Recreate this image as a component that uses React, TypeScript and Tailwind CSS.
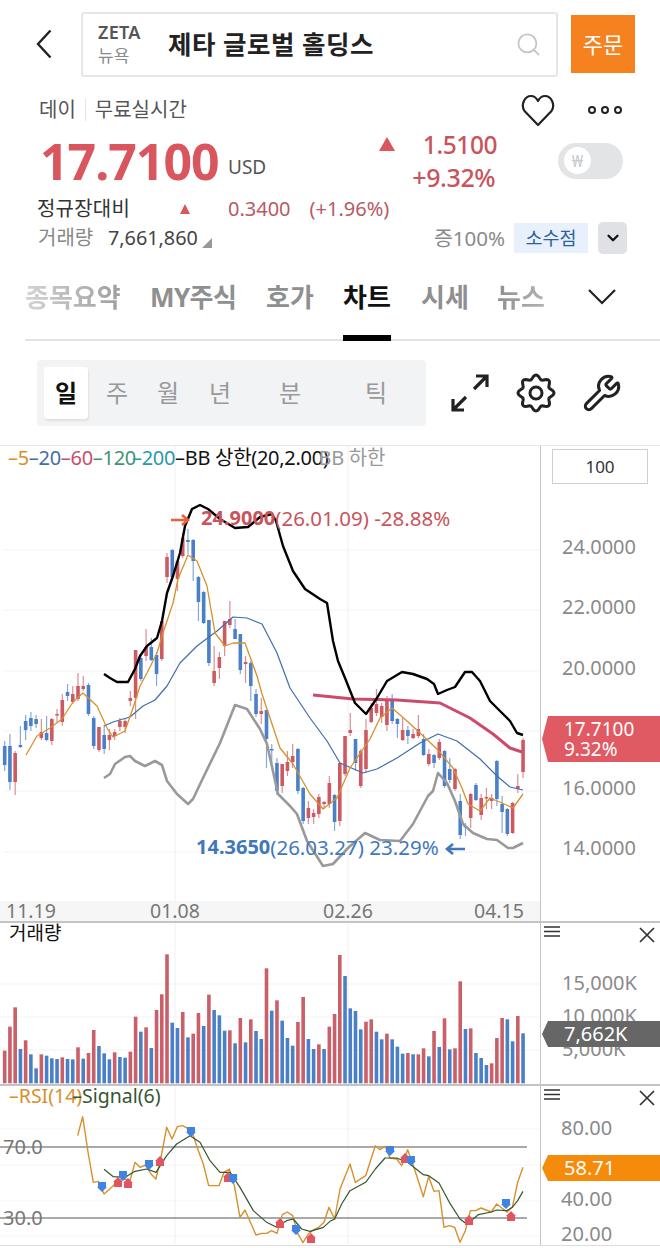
import { Wrench, Search, ChevronDown } from "lucide-react";

const stepX = 5.236;
const xAt = (i: number) => 4.7 + stepX * i;

// [kind, body top, body bottom, wick top, wick bottom]
type Candle = ["r" | "b", number, number, number, number];

const candles: Candle[] = [
  ["b", 745, 764, 740, 770], ["b", 745, 781, 733, 789], ["r", 752, 781, 750, 794], ["b", 744, 746, 725, 747],
  ["b", 720, 729, 714, 739], ["b", 717, 725, 711, 730], ["b", 718, 723, 714, 727], ["r", 731, 737, 718, 739],
  ["b", 732, 739, 715, 740], ["r", 718, 740, 717, 744], ["r", 713, 714, 708, 721], ["r", 699, 721, 693, 725],
  ["b", 691, 695, 683, 700], ["r", 693, 701, 685, 703], ["r", 685, 698, 672, 700], ["r", 685, 688, 675, 690],
  ["b", 684, 713, 682, 715], ["b", 717, 745, 715, 748], ["r", 726, 749, 726, 751], ["b", 734, 748, 724, 753],
  ["r", 734, 739, 728, 749], ["r", 731, 735, 728, 739], ["r", 720, 726, 717, 730], ["r", 720, 726, 717, 732],
  ["r", 697, 700, 690, 705], ["r", 649, 697, 649, 718], ["b", 657, 678, 655, 680], ["r", 646, 655, 628, 660],
  ["b", 646, 659, 637, 660], ["b", 654, 673, 651, 685], ["r", 620, 658, 620, 660], ["r", 556, 576, 552, 582],
  ["b", 549, 576, 548, 577], ["r", 560, 578, 559, 590], ["r", 537, 555, 532, 557], ["b", 539, 541, 528, 553],
  ["b", 539, 560, 538, 580], ["b", 576, 601, 575, 620], ["b", 591, 622, 590, 623], ["b", 619, 662, 619, 665],
  ["r", 670, 682, 645, 685], ["r", 656, 667, 651, 678], ["r", 620, 645, 620, 655], ["r", 618, 624, 600, 627],
  ["b", 628, 638, 618, 638], ["b", 633, 669, 633, 673], ["r", 661, 663, 655, 682], ["b", 662, 685, 660, 700],
  ["b", 693, 713, 688, 716], ["r", 710, 713, 697, 723], ["b", 709, 738, 709, 767], ["b", 748, 749, 743, 763],
  ["b", 762, 790, 757, 794], ["r", 763, 785, 763, 792], ["r", 761, 770, 750, 775], ["r", 755, 761, 743, 767],
  ["b", 748, 790, 747, 793], ["b", 787, 820, 786, 823], ["r", 807, 817, 800, 823], ["r", 812, 816, 808, 823],
  ["r", 796, 813, 793, 817], ["r", 801, 803, 800, 808], ["r", 782, 803, 775, 807], ["b", 794, 821, 793, 830],
  ["r", 762, 820, 762, 825], ["r", 735, 773, 735, 775], ["r", 729, 732, 712, 735], ["b", 738, 762, 738, 770],
  ["r", 750, 785, 748, 787], ["r", 729, 768, 718, 772], ["r", 707, 721, 702, 722], ["r", 703, 712, 688, 715],
  ["r", 705, 716, 702, 722], ["r", 698, 724, 695, 730], ["b", 698, 720, 693, 723], ["b", 718, 723, 717, 737],
  ["r", 729, 739, 717, 740], ["b", 729, 735, 725, 743], ["r", 733, 737, 728, 738], ["r", 728, 735, 714, 737],
  ["b", 738, 754, 733, 755], ["r", 753, 763, 748, 765], ["b", 754, 762, 753, 767], ["r", 741, 757, 738, 759],
  ["b", 750, 785, 749, 787], ["b", 768, 779, 757, 782], ["r", 768, 788, 767, 790], ["b", 800, 834, 793, 838],
  ["b", 825, 826, 822, 835], ["r", 793, 817, 792, 827], ["b", 784, 799, 782, 800], ["r", 797, 814, 793, 819],
  ["r", 796, 797, 787, 808], ["r", 797, 800, 793, 808], ["b", 760, 798, 759, 805], ["b", 803, 811, 795, 832],
  ["b", 808, 833, 807, 835], ["r", 802, 832, 801, 833], ["r", 785, 788, 773, 792], ["r", 739, 771, 737, 777],
];

// [kind, bar top on the 3x crop]
const volumes: ["r" | "b", number][] = [
  ["r", 392], ["r", 320], ["r", 262], ["b", 387], ["r", 361], ["b", 403], ["b", 445], ["r", 403], ["b", 407], ["b", 415],
  ["b", 417], ["r", 412], ["b", 417], ["b", 418], ["r", 382], ["b", 416], ["r", 399], ["r", 330], ["b", 378], ["b", 400],
  ["b", 418], ["r", 397], ["b", 411], ["b", 413], ["r", 395], ["r", 290], ["b", 335], ["r", 322], ["b", 384], ["r", 270],
  ["r", 223], ["r", 103], ["b", 308], ["b", 324], ["r", 276], ["b", 352], ["r", 341], ["r", 279], ["b", 318], ["r", 224],
  ["b", 270], ["b", 286], ["b", 332], ["r", 331], ["b", 370], ["r", 294], ["b", 367], ["r", 298], ["b", 333], ["b", 357],
  ["r", 145], ["b", 272], ["r", 241], ["b", 302], ["b", 354], ["b", 377], ["r", 306], ["r", 231], ["b", 357], ["b", 387],
  ["r", 373], ["b", 387], ["r", 320], ["r", 282], ["r", 105], ["b", 168], ["b", 265], ["b", 273], ["b", 328], ["r", 305],
  ["r", 298], ["b", 335], ["b", 358], ["r", 341], ["b", 358], ["b", 380], ["b", 401], ["r", 399], ["b", 403], ["r", 403],
  ["r", 385], ["b", 409], ["r", 333], ["b", 381], ["r", 295], ["b", 388], ["r", 385], ["r", 184], ["b", 327], ["r", 325],
  ["b", 399], ["b", 414], ["b", 435], ["r", 430], ["r", 354], ["r", 294], ["b", 298], ["b", 364], ["r", 288], ["b", 340],
];

const bbUpper =
  "104,673 110,677 117,681 128,681 135,668 140,655 147,645 157,637 162,620 167,592 173,575 180,552 185,525 192,508 200,504 208,508 220,518 235,527 248,526 260,516 272,513 276,520 283,545 293,570 305,588 320,598 327,602 333,640 338,660 345,677 355,702 366,713 377,697 387,680 402,671 413,673 427,678 434,683 438,693 447,689 455,686 465,671 472,671 480,680 490,700 500,710 510,720 517,732 523,734";
const bbLower =
  "104,777 110,773 115,763 125,756 130,755 135,760 145,765 155,760 162,764 167,780 177,793 188,803 193,798 203,777 220,742 235,704 247,708 260,728 267,743 278,793 290,805 297,813 307,840 323,865 333,863 348,847 365,832 380,839 400,840 413,823 428,795 433,790 438,772 447,782 455,800 463,823 473,832 487,838 497,839 508,847 513,847 523,842";
const ma60 = "313,694 353,698 397,699 440,702 470,717 493,733 510,747 522,751";
const ma20 =
  "104,725 113,721 130,716 143,705 155,699 167,685 180,662 197,645 217,630 233,616 247,617 262,623 277,652 290,687 310,717 327,740 340,762 363,772 377,768 397,757 420,742 438,733 457,740 480,758 497,775 510,786 523,789";
const ma5 =
  "26,754 37,735 50,727 62,718 73,701 83,692 97,705 107,727 113,736 125,730 133,707 140,685 147,672 157,652 163,632 173,602 178,578 188,554 197,560 207,585 215,632 225,645 233,642 245,642 257,675 262,693 280,747 293,763 310,793 323,808 337,797 350,767 370,738 380,717 392,707 407,720 420,732 437,748 453,767 462,787 468,803 480,810 490,797 502,802 513,807 523,793";

const toPoints = (left: [number, number][], right: [number, number][]) =>
  [...left.map(([x, y]) => `${x / 3},${y / 3}`), ...right.map(([x, y]) => `${330 + x / 3},${y / 3}`)].join(" ");

const rsiLine = toPoints(
  [[233, 155], [248, 98], [265, 210], [280, 295], [295, 292], [312, 330], [335, 310], [355, 290], [375, 285], [390, 290], [405, 235], [420, 250], [437, 243], [453, 270], [468, 285], [485, 210], [500, 130], [516, 165], [532, 128], [548, 125], [575, 140], [595, 200], [610, 240], [626, 305], [657, 305], [672, 265], [688, 255], [703, 305], [720, 400], [735, 378], [768, 453], [785, 448], [800, 448], [815, 440], [831, 448], [847, 392], [862, 384], [878, 395], [893, 448], [909, 476], [925, 450], [940, 438], [956, 430], [972, 415], [987, 370]],
  [[14, 405], [30, 315], [60, 240], [76, 295], [107, 275], [136, 185], [150, 197], [165, 187], [180, 222], [200, 225], [215, 245], [233, 197], [250, 245], [265, 290], [280, 338], [296, 278], [312, 322], [327, 320], [342, 430], [358, 425], [374, 430], [390, 475], [406, 440], [421, 380], [437, 380], [453, 372], [484, 384], [500, 360], [531, 384], [547, 370], [563, 295], [579, 250]],
);
const signalLine = toPoints(
  [[312, 256], [340, 278], [375, 280], [405, 262], [440, 255], [468, 265], [500, 215], [530, 180], [570, 155], [600, 175], [630, 230], [660, 265], [690, 265], [720, 310], [760, 380], [800, 415], [830, 430], [860, 410], [880, 405], [905, 435], [930, 442], [970, 430]],
  [[0, 412], [14, 405], [35, 360], [60, 320], [107, 295], [136, 255], [165, 222], [200, 222], [233, 235], [280, 272], [296, 275], [327, 297], [358, 355], [390, 405], [410, 420], [445, 392], [484, 384], [500, 378], [530, 380], [547, 370], [563, 350], [579, 322]],
);

const sellMarks = [[102, 102], [123, 91], [149, 80], [191, 47], [233, 94], [296, 145], [390, 66], [411, 76], [506, 119]];
const buyMarks = [[118, 99], [128, 100], [160, 78], [228, 94], [280, 140], [311, 155], [405, 75], [469, 137], [511, 133]];

// 8-lobed outline of the settings cog
const gearPath = Array.from({ length: 97 }, (_, i) => {
  const t = (i / 96) * Math.PI * 2;
  const r = 16 + 2 * Math.cos(8 * t);
  return `${i === 0 ? "M" : "L"}${(20 + r * Math.sin(t)).toFixed(2)} ${(20 - r * Math.cos(t)).toFixed(2)}`;
}).join("") + "Z";

const RED = "#cc5a62";
const BLUE = "#4a80c8";

function PriceChart() {
  return (
    <svg width="540" height="475" viewBox="0 445 540 475" className="block">
      {[549, 609, 670, 730, 790, 851].map((y) => (
        <line key={y} x1="4" x2="540" y1={y} y2={y} stroke="#f3f3f3" />
      ))}
      {[175, 348].map((x) => (
        <line key={x} x1={x} x2={x} y1="445" y2="900" stroke="#f0f0f0" />
      ))}
      {candles.map(([kind, top, bottom, wickTop, wickBottom], i) => (
        <g key={i}>
          <line x1={xAt(i)} x2={xAt(i)} y1={wickTop} y2={wickBottom} stroke={kind === "r" ? "#d98f94" : "#84a8d8"} strokeWidth="1.2" />
          <rect x={xAt(i) - 1.8} y={top} width="3.6" height={Math.max(bottom - top, 1.5)} fill={kind === "r" ? RED : BLUE} />
        </g>
      ))}
      <polyline points={bbLower} fill="none" stroke="#999999" strokeWidth="2.6" strokeLinejoin="round" />
      <polyline points={ma60} fill="none" stroke="#cc4a6c" strokeWidth="3" strokeLinejoin="round" />
      <polyline points={ma20} fill="none" stroke="#3f6ea8" strokeWidth="1.2" strokeLinejoin="round" />
      <polyline points={ma5} fill="none" stroke="#d8902c" strokeWidth="1.3" strokeLinejoin="round" />
      <polyline points={bbUpper} fill="none" stroke="#000000" strokeWidth="2.4" strokeLinejoin="round" />
      <path d="M171 519H188M182 514l6 5-6 5" fill="none" stroke="#e8603c" strokeWidth="2.6" />
      <path d="M448 848H465M453 843l-6 5 6 5" fill="none" stroke="#3f78bd" strokeWidth="2.6" />
    </svg>
  );
}

function VolumeChart() {
  return (
    <svg width="540" height="161" viewBox="0 923 540 161" className="block">
      {[984, 1017, 1050].map((y) => (
        <line key={y} x1="0" x2="540" y1={y} y2={y} stroke="#f3f3f3" />
      ))}
      {[175, 348].map((x) => (
        <line key={x} x1={x} x2={x} y1="921" y2="1084" stroke="#f0f0f0" />
      ))}
      {volumes.map(([kind, top], i) => (
        <rect key={i} x={xAt(i) - 1.8} y={920 + top / 3} width="3.6" height={(490 - top) / 3} fill={kind === "r" ? "#c95f68" : "#4a80c8"} />
      ))}
    </svg>
  );
}

function RsiChart() {
  return (
    <svg width="540" height="158" viewBox="0 2 540 158" className="block">
      {[45, 81, 117, 152].map((y) => (
        <line key={y} x1="0" x2="540" y1={y} y2={y} stroke="#f4f4f4" />
      ))}
      {[175, 348].map((x) => (
        <line key={x} x1={x} x2={x} y1="0" y2="160" stroke="#f0f0f0" />
      ))}
      <line x1="0" x2="527" y1="63" y2="63" stroke="#555555" strokeWidth="1.2" />
      <line x1="0" x2="527" y1="134" y2="134" stroke="#555555" strokeWidth="1.2" />
      <polyline points={rsiLine} fill="none" stroke="#d8902c" strokeWidth="1.4" strokeLinejoin="round" />
      <polyline points={signalLine} fill="none" stroke="#35562f" strokeWidth="1.2" strokeLinejoin="round" />
      {buyMarks.map(([x, y], i) => (
        <path key={i} d={`M${x} ${y - 6}l5 5h-1V${y + 4}h-8V${y - 1}h-1z`} fill="#e0555f" />
      ))}
      {sellMarks.map(([x, y], i) => (
        <path key={i} d={`M${x} ${y + 6}l5-5h-1V${y - 4}h-8V${y + 1}h-1z`} fill="#3f84e0" />
      ))}
    </svg>
  );
}

function AxisTools() {
  return (
    <div className="flex items-start justify-between h-[20px] pl-[2px] pr-[4px] pt-[2px]">
      <svg width="18" height="14" viewBox="0 0 18 14" fill="none" stroke="#333333" strokeWidth="1.3">
        <path d="M1 2H17M1 6.5H17M1 11H17" />
      </svg>
      <svg width="18" height="18" viewBox="0 0 18 18" fill="none" stroke="#333333" strokeWidth="1.7" className="mt-[1px]">
        <path d="M2 2L16 16M16 2L2 16" />
      </svg>
    </div>
  );
}

function Tag({ children, color }: { children: React.ReactNode; color: string }) {
  return (
    <div
      className="w-[118px] pl-[22px] text-white flex flex-col justify-center [clip-path:polygon(6px_0,100%_0,100%_100%,6px_100%,0_50%)]"
      style={{ backgroundColor: color }}
    >
      {children}
    </div>
  );
}

export default function App() {
  return (
    <div className="w-[660px] h-[1248px] overflow-hidden bg-white flex flex-col font-['Noto_Sans','Noto_Sans_CJK_KR',sans-serif]">
      {/* 상단 검색 */}
      <div className="h-[88px] shrink-0 flex items-center pl-[36px]">
        <svg width="16" height="30" viewBox="0 0 16 30" fill="none" stroke="#222222" strokeWidth="2.4" className="shrink-0">
          <path d="M14.5 1.5L2 15L14.5 28.5" />
        </svg>
        <div className="ml-[29px] w-[477px] h-[65px] border-2 border-[#e4e6e8] rounded-[3px] flex items-center pl-[15px] pr-[14px]">
          <div className="w-[70px] flex flex-col leading-[24px]">
            <span className="text-[18px] font-semibold text-[#555] tracking-[0.3px]">ZETA</span>
            <span className="text-[17px] text-[#8a8a8a]">뉴욕</span>
          </div>
          <span className="text-[25.5px] font-bold text-[#222] tracking-[0.5px] flex-1">제타 글로벌 홀딩스</span>
          <Search size={27} strokeWidth={1.6} className="text-[#c6c6c6]" />
        </div>
        <div className="ml-[13px] w-[64px] h-[58px] bg-[#f5821f] text-white text-[22px] flex items-center justify-center">주문</div>
      </div>

      {/* 시세 정보 */}
      <div className="h-[38px] shrink-0 mt-[3px] flex items-center pl-[39px] pr-[38px] text-[20px] text-[#555]">
        <span>데이</span>
        <span className="mx-[9px] w-px h-[22px] bg-[#e4e4e4]" />
        <span>무료실시간</span>
        <svg width="34" height="34" viewBox="0 0 34 34" fill="none" stroke="#222222" strokeWidth="2.2" strokeLinejoin="round" className="ml-auto mr-[-1px]">
          <path d="M17 32L3.5 18C-0.5 12 3.5 3 10 3C13 3 15.5 5 17 8C18.5 5 21 3 24 3C30.5 3 34.5 12 30.5 18Z" />
        </svg>
        <div className="ml-[34px] flex gap-[5px]">
          <span className="w-[8px] h-[8px] rounded-full border-2 border-[#222]" />
          <span className="w-[8px] h-[8px] rounded-full border-2 border-[#222]" />
          <span className="w-[8px] h-[8px] rounded-full border-2 border-[#222]" />
        </div>
      </div>
      <div className="h-[63px] shrink-0 flex items-center pl-[40px] pr-[37px]">
        <span className="w-[188px] text-[50px] font-bold text-[#d9565f] tracking-[-1px] leading-none">17.7100</span>
        <span className="text-[19px] text-[#555] mt-[14px]">USD</span>
        <div className="ml-[113px] w-[118px] flex flex-col text-[#c8545c] text-[24.5px] font-medium leading-[33px]">
          <div className="flex items-center justify-between">
            <span className="w-0 h-0 border-x-[8px] border-x-transparent border-b-[14px] border-b-[#d9565f]" />
            <span className="tracking-[-0.4px]">1.5100</span>
          </div>
          <span className="text-right tracking-[-0.4px] pr-[2px] text-[25px]">+9.32%</span>
        </div>
        <div className="ml-auto w-[65px] h-[36px] rounded-full bg-[#e2e4e6] flex items-center pl-[6px]">
          <span className="w-[27px] h-[27px] rounded-full bg-white text-[#c9cbcd] text-[17px] flex items-center justify-center">₩</span>
        </div>
      </div>
      <div className="h-[28px] shrink-0 mt-[3px] flex items-center pl-[37px] text-[20px]">
        <span className="w-[143px] text-[#333] tracking-[0.2px]">정규장대비</span>
        <span className="w-0 h-0 border-x-[5px] border-x-transparent border-b-[10px] border-b-[#d9565f]" />
        <span className="ml-[38px] text-[#b85a62]">0.3400</span>
        <span className="ml-[19px] text-[#b85a62]">(+1.96%)</span>
      </div>
      <div className="h-[30px] shrink-0 flex items-center pl-[38px] pr-[33px] text-[20px]">
        <span className="w-[70px] text-[#888]">거래량</span>
        <span className="text-[#444] text-[19.8px]">7,661,860</span>
        <span className="ml-[4px] mt-[10px] w-0 h-0 border-l-[10px] border-l-transparent border-b-[10px] border-b-[#999]" />
        <span className="ml-auto text-[#8a8a8a] text-[20.5px]">증100%</span>
        <span className="ml-[9px] w-[74px] h-[30px] bg-[#e8f1fb] text-[#2f5f9f] text-[18.5px] flex items-center justify-center">소수점</span>
        <span className="ml-[10px] w-[29px] h-[32px] rounded-[5px] bg-[#dfe1e4] flex items-center justify-center">
          <ChevronDown size={18} strokeWidth={3} className="text-[#111]" />
        </span>
      </div>

      {/* 탭 */}
      <div className="h-[88px] shrink-0 ml-[25px] border-b-2 border-[#e2e2e2] flex items-start pt-[27px] text-[26px] font-bold text-[#8f8f8f]">
        <span className="w-[125px] leading-[34px] bg-linear-to-r from-[#d4d4d4] to-[#8f8f8f] bg-clip-text text-transparent">종목요약</span>
        <span className="w-[116px] leading-[34px] tracking-[-0.6px]">MY주식</span>
        <span className="w-[77px] leading-[34px]">호가</span>
        <span className="w-[78px] h-[61px] leading-[34px] text-[#111] relative">
          차트
          <span className="absolute left-0 w-[48px] h-[6px] bottom-0 bg-black" />
        </span>
        <span className="w-[76px] leading-[34px]">시세</span>
        <span className="w-[90px] leading-[34px] bg-linear-to-r from-[#8f8f8f] to-[#d4d4d4] bg-clip-text text-transparent">뉴스</span>
        <svg width="30" height="18" viewBox="0 0 30 18" fill="none" stroke="#222222" strokeWidth="2.2" className="mt-[8px]">
          <path d="M2 2L15 15L28 2" />
        </svg>
      </div>

      {/* 기간 */}
      <div className="h-[104px] shrink-0 flex items-start pt-[19px] pl-[37px]">
        <div className="w-[389px] h-[66px] bg-[#f2f3f5] rounded-[4px] flex items-center pl-[7px] text-[24px] text-[#999]">
          <span className="w-[44px] h-[52px] bg-white rounded-[4px] shadow-[1px_2px_2px_rgba(0,0,0,0.08)] text-[#111] font-bold flex items-center justify-center">일</span>
          <span className="w-[58px] text-center">주</span>
          <span className="w-[44px] text-center">월</span>
          <span className="w-[60px] text-center">년</span>
          <span className="w-[80px] text-center">분</span>
          <span className="w-[92px] text-center">틱</span>
        </div>
        <svg width="40" height="40" viewBox="0 0 40 40" fill="none" stroke="#222222" strokeWidth="3.2" className="ml-[24px] mt-[13px]">
          <path d="M3 37L16 24M3 26V37H14M37 3L24 16M26 3H37V14" />
        </svg>
        <svg width="40" height="40" viewBox="0 0 40 40" fill="none" stroke="#222222" strokeWidth="3" className="ml-[26px] mt-[13px]">
          <path d={gearPath} />
          <circle cx="20" cy="20" r="6" />
        </svg>
        <Wrench size={40} strokeWidth={1.8} className="ml-[26px] mt-[13px] text-[#222]" />
      </div>

      {/* 차트 */}
      <div className="h-[476px] shrink-0 border-t border-[#e6e6e6] flex">
        <div className="w-[540px] relative border-r border-[#c4c4c4] box-content">
          <PriceChart />
          <div className="absolute left-[8px] top-0 h-[24px] flex items-center text-[20px] whitespace-nowrap tracking-[-0.3px]">
            <span className="text-[#d8902c]">–5</span>
            <span className="text-[#3f6ea8]">–20</span>
            <span className="text-[#c4506e]">–60</span>
            <span className="text-[#3f9478]">–120</span>
            <span className="text-[#2a9aa8] -ml-[4px]">–200</span>
            <span className="text-[#111]">–BB 상한(20,2.00)</span>
            <span className="text-[#999] -ml-[10px]">BB 하한</span>
          </div>
          <div className="absolute left-[201px] top-[57px] flex items-center text-[#c8545c] text-[20.5px] whitespace-nowrap">
            <span className="font-bold text-[20px]">24.9000</span>
            <span>(26.01.09) -28.88%</span>
          </div>
          <div className="absolute left-[196px] top-[386px] flex items-center text-[#3f78bd] text-[20.5px] whitespace-nowrap">
            <span className="font-bold text-[20px]">14.3650</span>
            <span>(26.03.27) 23.29%</span>
          </div>
          <div className="absolute left-0 right-0 bottom-0 h-[20px] bg-[#f6f6f6] flex items-center text-[19.5px] text-[#777] leading-none">
            <span className="absolute left-[6px]">11.19</span>
            <span className="absolute left-[150px]">01.08</span>
            <span className="absolute left-[323px]">02.26</span>
            <span className="absolute left-[474px]">04.15</span>
          </div>
        </div>
        <div className="flex-1 flex flex-col relative text-[#8a8a8a] text-[20px] leading-none">
          <div className="mt-[3px] ml-[11px] w-[96px] h-[35px] border border-[#cfcfcf] text-[#333] text-[17px] flex items-center justify-center">100</div>
          <div className="absolute left-[21px] top-[91px] flex flex-col gap-[40.4px]">
            <span>24.0000</span>
            <span>22.0000</span>
            <span>20.0000</span>
          </div>
          <div className="absolute left-[21px] top-[332px] flex flex-col gap-[40px]">
            <span>16.0000</span>
            <span>14.0000</span>
          </div>
          <div className="absolute left-[1px] top-[270px]">
            <Tag color="#e05a63">
              <div className="h-[46px] flex flex-col justify-center text-[19px] leading-[20px]">
                <span>17.7100</span>
                <span>9.32%</span>
              </div>
            </Tag>
          </div>
        </div>
      </div>

      {/* 거래량 */}
      <div className="h-[163px] shrink-0 border-t-2 border-[#c4c4c4] flex">
        <div className="w-[540px] relative border-r border-[#c4c4c4] box-content">
          <VolumeChart />
          <span className="absolute left-[9px] top-[-3px] text-[19px] text-[#111] leading-[26px]">거래량</span>
        </div>
        <div className="flex-1 relative text-[#8a8a8a] text-[20px] leading-none">
          <AxisTools />
          <div className="absolute left-[21px] top-[50px] flex flex-col gap-[13px]">
            <span>15,000K</span>
            <span>10,000K</span>
            <span>5,000K</span>
          </div>
          <div className="absolute left-[1px] top-[98px]">
            <Tag color="#666666">
              <span className="h-[26px] text-[20px] flex items-center">7,662K</span>
            </Tag>
          </div>
        </div>
      </div>

      {/* RSI */}
      <div className="h-[162px] shrink-0 border-t-2 border-b border-t-[#c4c4c4] border-b-[#dddddd] flex">
        <div className="w-[540px] relative border-r border-[#c4c4c4] box-content">
          <RsiChart />
          <div className="absolute left-[9px] top-[-2px] h-[24px] flex items-center text-[19.5px] whitespace-nowrap">
            <span className="text-[#d8902c]">–RSI(14)</span>
            <span className="text-[#35562f] -ml-[10px]">–Signal(6)</span>
          </div>
          <span className="absolute left-[3px] top-[46px] text-[20px] text-[#777]">70.0</span>
          <span className="absolute left-[3px] top-[117px] text-[20px] text-[#777]">30.0</span>
        </div>
        <div className="flex-1 relative text-[#8a8a8a] text-[20px] leading-none">
          <AxisTools />
          <span className="absolute left-[20px] top-[32px]">80.00</span>
          <span className="absolute left-[20px] top-[103px]">40.00</span>
          <span className="absolute left-[20px] top-[138px]">20.00</span>
          <div className="absolute left-[1px] top-[69px]">
            <Tag color="#f58a0b">
              <span className="h-[26px] text-[20px] flex items-center">58.71</span>
            </Tag>
          </div>
        </div>
      </div>
    </div>
  );
}
